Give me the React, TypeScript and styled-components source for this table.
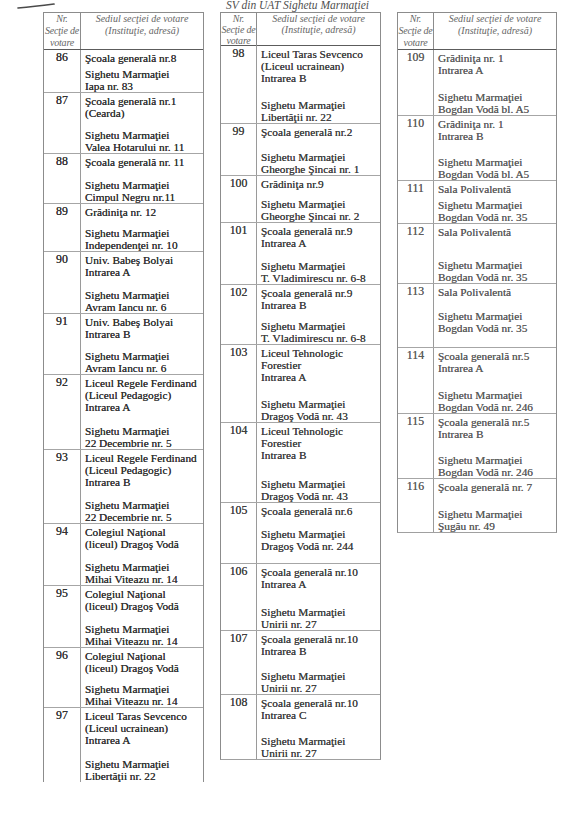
import styled, { createGlobalStyle } from 'styled-components'

const GlobalStyle = createGlobalStyle`
  html, body {
    margin: 0;
    padding: 0;
    background: #ffffff;
  }
  body {
    font-family: 'Liberation Serif', 'Times New Roman', serif;
    color: #3d3d3d;
  }
`

type Section = {
  nr: number
  h: number
  name: string[]
  addr: string[]
  pad?: number
}

type Column = {
  key: string
  numW: number
  headH: number
  headLh: number
  tone: string
  open?: boolean
  rows: Section[]
}

const SM = 'Sighetu Marmaţiei'

const columns: Column[] = [
  {
    key: 'left',
    numW: 37,
    headH: 37,
    headLh: 12,
    tone: '#333333',
    open: true,
    rows: [
      { nr: 86, h: 42, name: ['Şcoala generală nr.8'], addr: [SM, 'Iapa nr. 83'] },
      { nr: 87, h: 61, name: ['Şcoala generală nr.1', '(Cearda)'], addr: [SM, 'Valea Hotarului nr. 11'] },
      { nr: 88, h: 50, name: ['Şcoala generală nr. 11'], addr: [SM, 'Cimpul Negru nr.11'] },
      { nr: 89, h: 48, name: ['Grădiniţa nr. 12'], addr: [SM, 'Independenţei nr. 10'] },
      { nr: 90, h: 62, name: ['Univ. Babeş Bolyai', 'Intrarea A'], addr: [SM, 'Avram Iancu nr. 6'] },
      { nr: 91, h: 61, name: ['Univ. Babeş Bolyai', 'Intrarea B'], addr: [SM, 'Avram Iancu nr. 6'] },
      {
        nr: 92,
        h: 75,
        name: ['Liceul Regele Ferdinand', '(Liceul Pedagogic)', 'Intrarea A'],
        addr: [SM, '22 Decembrie nr. 5'],
      },
      {
        nr: 93,
        h: 74,
        name: ['Liceul Regele Ferdinand', '(Liceul Pedagogic)', 'Intrarea B'],
        addr: [SM, '22 Decembrie nr. 5'],
      },
      { nr: 94, h: 62, name: ['Colegiul Naţional', '(liceul) Dragoş Vodă'], addr: [SM, 'Mihai Viteazu nr. 14'] },
      { nr: 95, h: 62, name: ['Colegiul Naţional', '(liceul) Dragoş Vodă'], addr: [SM, 'Mihai Viteazu nr. 14'] },
      { nr: 96, h: 60, name: ['Colegiul Naţional', '(liceul) Dragoş Vodă'], addr: [SM, 'Mihai Viteazu nr. 14'] },
      {
        nr: 97,
        h: 75,
        name: ['Liceul Taras Sevcenco', '(Liceul ucrainean)', 'Intrarea A'],
        addr: [SM, 'Libertăţii nr. 22'],
      },
    ],
  },
  {
    key: 'middle',
    numW: 36,
    headH: 33,
    headLh: 11,
    tone: '#3f3f3f',
    rows: [
      {
        nr: 98,
        h: 77,
        name: ['Liceul Taras Sevcenco', '(Liceul ucrainean)', 'Intrarea B'],
        addr: [SM, 'Libertăţii nr. 22'],
      },
      { nr: 99, h: 52, name: ['Şcoala generală nr.2'], addr: [SM, 'Gheorghe Şincai nr. 1'] },
      { nr: 100, h: 47, name: ['Grădiniţa nr.9'], addr: [SM, 'Gheorghe Şincai nr. 2'] },
      { nr: 101, h: 62, name: ['Şcoala generală nr.9', 'Intrarea A'], addr: [SM, 'T. Vladimirescu nr. 6-8'] },
      { nr: 102, h: 60, name: ['Şcoala generală nr.9', 'Intrarea B'], addr: [SM, 'T. Vladimirescu nr. 6-8'] },
      { nr: 103, h: 78, name: ['Liceul Tehnologic', 'Forestier', 'Intrarea A'], addr: [SM, 'Dragoş Vodă nr. 43'] },
      { nr: 104, h: 80, name: ['Liceul Tehnologic', 'Forestier', 'Intrarea B'], addr: [SM, 'Dragoş Vodă nr. 43'] },
      { nr: 105, h: 61, pad: 11, name: ['Şcoala generală nr.6'], addr: [SM, 'Dragoş Vodă nr. 244'] },
      { nr: 106, h: 67, name: ['Şcoala generală nr.10', 'Intrarea A'], addr: [SM, 'Unirii nr. 27'] },
      { nr: 107, h: 64, name: ['Şcoala generală nr.10', 'Intrarea B'], addr: [SM, 'Unirii nr. 27'] },
      { nr: 108, h: 65, name: ['Şcoala generală nr.10', 'Intrarea C'], addr: [SM, 'Unirii nr. 27'] },
    ],
  },
  {
    key: 'right',
    numW: 36,
    headH: 37,
    headLh: 12,
    tone: '#5e5e5e',
    rows: [
      { nr: 109, h: 65, name: ['Grădiniţa nr. 1', 'Intrarea A'], addr: [SM, 'Bogdan Vodă bl. A5'] },
      { nr: 110, h: 65, name: ['Grădiniţa nr. 1', 'Intrarea B'], addr: [SM, 'Bogdan Vodă bl. A5'] },
      { nr: 111, h: 43, name: ['Sala Polivalentă'], addr: [SM, 'Bogdan Vodă nr. 35'] },
      { nr: 112, h: 60, name: ['Sala Polivalentă'], addr: [SM, 'Bogdan Vodă nr. 35'] },
      { nr: 113, h: 64, pad: 13, name: ['Sala Polivalentă'], addr: [SM, 'Bogdan Vodă nr. 35'] },
      { nr: 114, h: 66, name: ['Şcoala generală nr.5', 'Intrarea A'], addr: [SM, 'Bogdan Vodă nr. 246'] },
      { nr: 115, h: 65, name: ['Şcoala generală nr.5', 'Intrarea B'], addr: [SM, 'Bogdan Vodă nr. 246'] },
      { nr: 116, h: 54, name: ['Şcoala generală nr. 7'], addr: [SM, 'Şugău nr. 49'] },
    ],
  },
]

const Page = styled.div`
  position: relative;
  width: 575px;
  height: 823px;
  box-sizing: border-box;
  padding-left: 43px;
  display: grid;
  grid-template-columns: 161px 161px 160px;
  grid-template-rows: 12px auto;
  column-gap: 16px;
  align-items: start;
  overflow: hidden;
`

// pen stroke left on the scanned page
const PenMark = styled.svg`
  position: absolute;
  left: 16px;
  top: 1px;
`

const Title = styled.div`
  grid-row: 1;
  grid-column: 2;
  margin-left: -6px;
  font-size: 11.5px;
  line-height: 11px;
  font-style: italic;
  text-align: center;
  color: #505050;
  white-space: nowrap;
`

const Table = styled.div<{ $tone: string; $open?: boolean }>`
  grid-row: 2;
  box-sizing: border-box;
  border: 1px solid #8c8c8c;
  border-bottom: ${(p) => (p.$open ? 'none' : '1px solid #a0a0a0')};
  color: ${(p) => p.$tone};
  text-shadow: 0 0 0.35px ${(p) => p.$tone};
`

const Header = styled.div<{ $numW: number; $h: number; $lh: number }>`
  display: grid;
  grid-template-columns: ${(p) => p.$numW}px 1fr;
  height: ${(p) => p.$h}px;
  box-sizing: border-box;
  border-bottom: 1.5px solid #5c5c5c;
  font-size: 10px;
  line-height: ${(p) => p.$lh}px;
  font-style: italic;
  text-align: center;
  color: #666666;
  text-shadow: none;
`

const HeadNum = styled.div`
  border-right: 1px solid #8c8c8c;
  white-space: nowrap;
  overflow: visible;
  letter-spacing: -0.2px;
`

const HeadLabel = styled.div`
  padding: 0 2px;
`

const Row = styled.div<{ $numW: number; $h: number }>`
  display: grid;
  grid-template-columns: ${(p) => p.$numW}px 1fr;
  height: ${(p) => p.$h}px;
  box-sizing: border-box;

  & + & {
    border-top: 1px solid #a6a6a6;
  }
`

const NumCell = styled.div`
  border-right: 1px solid #9a9a9a;
  padding-top: 1px;
  font-size: 11.8px;
  line-height: 12.5px;
  text-align: center;
`

const TextCell = styled.div`
  display: flex;
  flex-direction: column;
  justify-content: space-between;
  padding: 1.5px 2px 0 4px;
  font-size: 11.3px;
  line-height: 12.2px;
  white-space: nowrap;
  overflow: visible;
`

const Lines = styled.div<{ $pad?: number }>`
  display: flex;
  flex-direction: column;
  padding-bottom: ${(p) => p.$pad ?? 0}px;
`

const Line = styled.span`
  display: block;
`

function SectionTable({ col }: { col: Column }) {
  return (
    <Table $tone={col.tone} $open={col.open}>
      <Header $numW={col.numW} $h={col.headH} $lh={col.headLh}>
        <HeadNum>
          Nr.
          <br />
          Secţie de
          <br />
          votare
        </HeadNum>
        <HeadLabel>
          Sediul secţiei de votare
          <br />
          (Instituţie, adresă)
        </HeadLabel>
      </Header>
      {col.rows.map((r) => (
        <Row key={r.nr} $numW={col.numW} $h={r.h}>
          <NumCell>{r.nr}</NumCell>
          <TextCell>
            <Lines>
              {r.name.map((l, i) => (
                <Line key={i}>{l}</Line>
              ))}
            </Lines>
            <Lines $pad={r.pad}>
              {r.addr.map((l, i) => (
                <Line key={i}>{l}</Line>
              ))}
            </Lines>
          </TextCell>
        </Row>
      ))}
    </Table>
  )
}

export default function App() {
  return (
    <>
      <GlobalStyle />
      <Page>
        <PenMark width="42" height="10" viewBox="0 0 42 10">
          <path d="M2 7 Q 18 5.6 38 3" stroke="#4a4a4a" strokeWidth="1.7" strokeLinecap="round" fill="none" />
        </PenMark>
        <Title>SV din UAT Sighetu Marmaţiei</Title>
        {columns.map((c) => (
          <SectionTable key={c.key} col={c} />
        ))}
      </Page>
    </>
  )
}
